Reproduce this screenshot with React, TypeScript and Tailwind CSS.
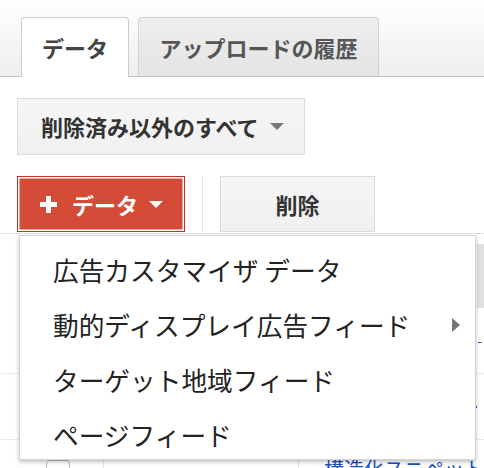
import React from 'react';

const font = { fontFamily: '"Noto Sans CJK JP", "Noto Sans", sans-serif' };

const Caret = ({ className }: { className: string }) => (
  <span className={`inline-block h-0 w-0 border-x-[7px] border-t-[7px] border-x-transparent ${className}`} />
);

const menuItems = ['広告カスタマイザ データ', '動的ディスプレイ広告フィード', 'ターゲット地域フィード', 'ページフィード'];

const DataMenu = () => {
  return (
    <div className="absolute left-[19px] top-[235px] w-[457px] h-[225px] bg-white border border-[#d4d4d4] shadow-[0_2px_4px_rgba(0,0,0,0.25)] pt-[6px]">
      {menuItems.map((item, i) => (
        <div key={item} className="flex h-[55px] items-center justify-between pl-[33px] pr-[15px]">
          <span className="text-[25.7px] text-[#222] leading-none">{item}</span>
          {i === 1 && (
            <span className="inline-block h-0 w-0 border-y-[7px] border-l-[8px] border-y-transparent border-l-[#777]" />
          )}
        </div>
      ))}
    </div>
  );
};

const TableBehind = () => {
  return (
    <div className="mt-[1px] border-t border-[#e2e2e2]">
      <div className="mt-[10px] flex h-[64px] justify-end">
        <div className="w-[7px] bg-[#e2e2e2]" />
      </div>
      <div className="flex h-[66px] items-center justify-end border-b border-[#ebebeb] pr-[2px]">
        <span className="text-[14px] text-[#1a4fc4]">-</span>
      </div>
      <div className="flex h-[66px] items-center justify-end border-b border-[#ebebeb] pr-[4px]">
        <span className="text-[14px] text-[#1a4fc4]">·</span>
      </div>
      <div className="flex h-[40px]">
        <div className="w-[108px] border-r border-[#e5e5e5] pl-[46px] pt-[20px]">
          <div className="h-[20px] w-[24px] rounded-[4px] border border-[#bbb]" />
        </div>
        <div className="w-[207px] border-r border-[#e5e5e5]" />
        <div className="pl-[25px] pt-[14px] text-[20px] leading-[30px] text-[#1a4fc4] whitespace-nowrap">構造化スニペット</div>
      </div>
    </div>
  );
};

export default function App() {
  return (
    <div className="relative h-[468px] w-[484px] overflow-hidden bg-white" style={font}>
      <div className="flex h-[77px] items-end gap-[9px] border-b border-[#c8c8c8] bg-gradient-to-b from-white to-[#eeeeee] pl-[21px]">
        <div className="-mb-px flex h-[60px] w-[108px] items-center justify-center rounded-t-[4px] border border-b-0 border-[#cdcdcd] bg-white text-[22px] font-bold text-[#444]">
          データ
        </div>
        <div className="flex h-[59px] w-[241px] items-center justify-center rounded-t-[4px] border border-b-0 border-[#d2d2d2] bg-gradient-to-b from-[#eeeeee] to-[#e4e4e4] text-[22px] font-bold text-[#555]">
          アップロードの履歴
        </div>
      </div>

      <div className="pl-[17px] pt-[21px]">
        <div className="flex h-[57px] w-[288px] items-center gap-[11px] border border-[#dcdcdc] bg-gradient-to-b from-[#f6f6f6] to-[#f0f0f0] pl-[23px] text-[22px] font-bold text-[#333]">
          削除済み以外のすべて
          <Caret className="border-t-[#777]" />
        </div>
      </div>

      <div className="flex items-stretch pl-[17px] pt-[21px]">
        <div className="flex h-[56px] w-[168px] items-center border border-[#c7321f] bg-[#d44b38] pl-[22px] text-[22px] font-bold text-white shadow-[inset_0_0_0_1.5px_#fff]">
          <span className="relative mr-[15px] inline-block h-[17px] w-[17px]">
            <span className="absolute left-0 top-[6px] h-[5px] w-[17px] bg-white" />
            <span className="absolute left-[6px] top-0 h-[17px] w-[5px] bg-white" />
          </span>
          データ
          <Caret className="ml-[11px] border-t-white" />
        </div>
        <div className="ml-[17px] w-px bg-[#e6e6e6]" />
        <div className="ml-[17px] flex h-[56px] w-[155px] items-center justify-center border border-[#dcdcdc] bg-gradient-to-b from-[#f5f5f5] to-[#f0f0f0] text-[22px] font-bold text-[#333]">
          削除
        </div>
      </div>

      <TableBehind />
      <DataMenu />
    </div>
  );
}
